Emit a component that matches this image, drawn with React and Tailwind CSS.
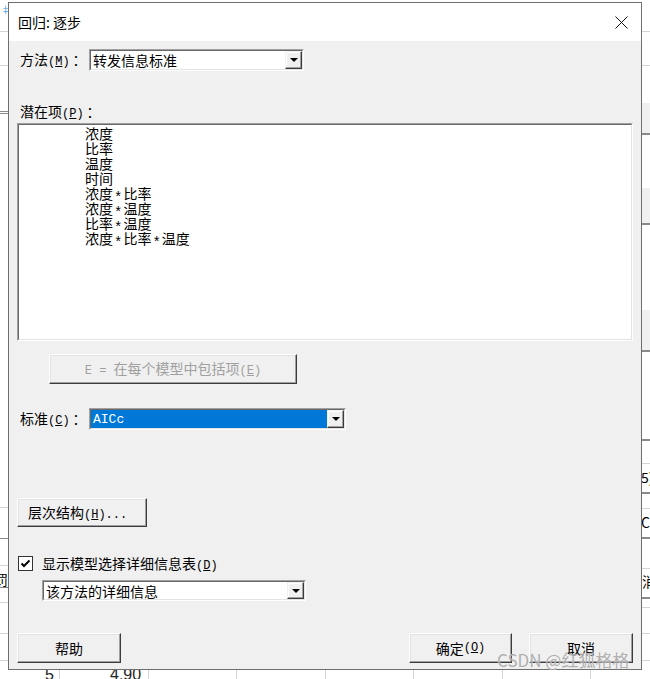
const cjk = { fontFamily: '"Noto Sans CJK SC", "Noto Sans", sans-serif' };
const mono = { fontFamily: '"Liberation Mono", monospace', fontSize: 12 };

// half-width Latin, roughly the width of the dialog's bitmap font
function L({ children }) {
  return <span style={mono}>{children}</span>;
}

function Key({ k }) {
  return (
    <L>
      (<u>{k}</u>)
    </L>
  );
}

function Colon() {
  return <span className="ml-[3px]">：</span>;
}

function Raised({ className = '', children }) {
  return (
    <div
      className={`flex items-center justify-center bg-[#f0f0f0] border border-t-white border-l-white border-r-[#3c3c3c] border-b-[#3c3c3c] shadow-[inset_-1px_-1px_0_#a0a0a0,inset_1px_1px_0_#e3e3e3] ${className}`}
    >
      {children}
    </div>
  );
}

function Arrow() {
  return (
    <div className="flex w-[17px] h-full items-center justify-center bg-[#f0f0f0] border border-t-[#f0f0f0] border-l-[#f0f0f0] border-r-[#3c3c3c] border-b-[#3c3c3c] shadow-[inset_-1px_-1px_0_#a0a0a0,inset_1px_1px_0_#ffffff]">
      <div className="w-0 h-0 border-l-[4px] border-r-[4px] border-t-[4px] border-l-transparent border-r-transparent border-t-black" />
    </div>
  );
}

function Combo({ className = '', text, selected, monoText }) {
  return (
    <div className={`flex border border-t-[#a0a0a0] border-l-[#a0a0a0] border-r-white border-b-white ${className}`}>
      <div className="flex flex-1 bg-white border border-t-[#696969] border-l-[#696969] border-r-[#e3e3e3] border-b-[#e3e3e3]">
        <div
          className={`flex flex-1 items-center pl-[2px] text-[14px] leading-none ${selected ? 'bg-[#0078d7] text-white' : 'text-black'}`}
          style={monoText ? { fontFamily: '"Liberation Mono", monospace', fontSize: 13 } : undefined}
        >
          {text}
        </div>
        <Arrow />
      </div>
    </div>
  );
}

const items = ['浓度', '比率', '温度', '时间', '浓度*比率', '浓度*温度', '比率*温度', '浓度*比率*温度'];

function Term({ t }) {
  const parts = t.split('*');
  return (
    <>
      {parts.map((p, i) => (
        <span key={i}>
          {i > 0 && (
            <span
              className="inline-block px-[1px] translate-y-[3px]"
              style={{ fontFamily: '"Liberation Mono", monospace', fontSize: 14 }}
            >
              *
            </span>
          )}
          {p}
        </span>
      ))}
    </>
  );
}

function BackgroundGrid() {
  const left = [31, 65];
  const leftDark = [111, 113, 538, 587];
  const leftLight = [507, 565, 602, 633, 660];
  const rightLight = [31, 65, 463, 508, 568, 607, 633, 660];
  const rightDark = [133, 223, 350, 439, 492, 537, 597];
  const bands = [[103, 30], [188, 35], [310, 40]];
  const cols = [59, 148, 236, 325, 413, 502, 590];
  return (
    <div className="absolute inset-0">
      <div className="absolute left-[1px] top-[5px] text-[9px] leading-none text-[#4a9ee0]">‡</div>
      {left.concat(leftLight).map((y) => (
        <div key={'l' + y} className="absolute left-0 w-[8px] h-px bg-[#d4d4d4]" style={{ top: y }} />
      ))}
      {leftDark.map((y) => (
        <div key={'ld' + y} className="absolute left-0 w-[8px] h-px bg-[#8a8a8a]" style={{ top: y }} />
      ))}
      <div className="absolute left-[-6px] top-[572px] text-[14px] leading-none" style={cjk}>罚]</div>
      {bands.map(([y, h]) => (
        <div key={'b' + y} className="absolute left-[642px] w-[8px] bg-[#f0f0f0]" style={{ top: y, height: h }} />
      ))}
      {rightLight.map((y) => (
        <div key={'r' + y} className="absolute left-[642px] w-[8px] h-px bg-[#d4d4d4]" style={{ top: y }} />
      ))}
      {rightDark.map((y) => (
        <div key={'rd' + y} className="absolute left-[642px] w-[8px] h-[2px] bg-[#8a8a8a]" style={{ top: y }} />
      ))}
      <div className="absolute left-[641px] top-[470px] text-[14px] leading-none" style={cjk}>5)</div>
      <div className="absolute left-[641px] top-[515px] text-[14px] leading-none" style={cjk}>C)</div>
      <div className="absolute left-[642px] top-[574px] text-[14px] leading-none" style={cjk}>消</div>
      {cols.map((x) => (
        <div key={'c' + x} className="absolute top-[660px] h-[19px] w-px bg-[#d4d4d4]" style={{ left: x }} />
      ))}
      <div className="absolute left-[45px] top-[667px] text-[16px] leading-none text-[#222]" style={{ fontFamily: '"Liberation Sans", sans-serif' }}>5</div>
      <div className="absolute left-[110px] top-[667px] text-[16px] leading-none text-[#222]" style={{ fontFamily: '"Liberation Sans", sans-serif' }}>4.90</div>
    </div>
  );
}

export default function App() {
  return (
    <div className="relative w-[650px] h-[679px] bg-white overflow-hidden pt-[2px] pl-[8px]" style={cjk}>
      <BackgroundGrid />

      <div className="relative flex flex-col w-[634px] h-[668px] border border-[#6e6e6e] bg-[#f0f0f0] text-black text-[14px]">
        {/* title bar */}
        <div className="flex items-center justify-between h-[38px] bg-white pl-[9px] pr-[13px]">
          <span className="text-[14px] leading-none">回归: 逐步</span>
          <svg width="13" height="13" viewBox="0 0 13 13">
            <path d="M0.5 0.5 L12.5 12.5 M12.5 0.5 L0.5 12.5" stroke="#111" strokeWidth="1" fill="none" />
          </svg>
        </div>

        {/* method */}
        <div className="flex items-center h-[22px] mt-[8px]">
          <span className="ml-[11px] w-[69px] leading-none whitespace-nowrap">方法<Key k="M" /><Colon /></span>
          <Combo className="w-[215px] h-full" text="转发信息标准" />
        </div>

        <div className="h-[16px] mt-[32px] ml-[11px] leading-[16px]">潜在项<Key k="P" /><Colon /></div>

        <div className="ml-[8px] mt-[4px] w-[616px] h-[218px] border border-t-[#a0a0a0] border-l-[#a0a0a0] border-r-white border-b-white">
          <div className="w-full h-full bg-white border border-t-[#696969] border-l-[#696969] border-r-[#e3e3e3] border-b-[#e3e3e3] pl-[66px] pt-[1px]">
            {items.map((t) => (
              <div key={t} className="leading-[15px] h-[15px] whitespace-nowrap"><Term t={t} /></div>
            ))}
          </div>
        </div>

        <Raised className="ml-[40px] mt-[13px] w-[248px] h-[30px] text-[#a0a0a0]">
          <span className="leading-none whitespace-nowrap"><L>E = </L>在每个模型中包括项<Key k="E" /></span>
        </Raised>

        {/* criterion */}
        <div className="flex items-center h-[22px] mt-[24px]">
          <span className="ml-[11px] w-[69px] leading-none whitespace-nowrap">标准<Key k="C" /><Colon /></span>
          <Combo className="w-[257px] h-full" text="AICc" selected monoText />
        </div>

        <Raised className="ml-[8px] mt-[68px] w-[130px] h-[29px] justify-start pl-[10px]">
          <span className="leading-none whitespace-nowrap">层次结构<Key k="H" /><L>...</L></span>
        </Raised>

        {/* checkbox */}
        <div className="flex items-center h-[15px] mt-[29px] ml-[9px]">
          <div className="flex items-center justify-center w-[15px] h-[15px] bg-white border border-[#333]">
            <svg width="11" height="11" viewBox="0 0 11 11">
              <path d="M1.5 5.5 L4 8 L9.5 2.5" stroke="#000" strokeWidth="2" fill="none" />
            </svg>
          </div>
          <span className="ml-[9px] leading-none whitespace-nowrap">显示模型选择详细信息表<Key k="D" /></span>
        </div>

        <Combo className="ml-[33px] mt-[9px] w-[264px] h-[21px]" text="该方法的详细信息" />

        {/* buttons */}
        <div className="flex mt-[32px] h-[30px]">
          <Raised className="ml-[8px] w-[104px] h-full">帮助</Raised>
          <Raised className="ml-[288px] w-[103px] h-full">确定<Key k="O" /></Raised>
          <Raised className="ml-[17px] w-[104px] h-full">取消</Raised>
        </div>
      </div>

      <div
        className="absolute left-[497px] top-[651px] text-[17px] leading-none text-[#a8a8a8] opacity-90 [text-shadow:0_0_1px_#ffffff]"
        style={cjk}
      >
        CSDN @红狐格格
      </div>
    </div>
  );
}
